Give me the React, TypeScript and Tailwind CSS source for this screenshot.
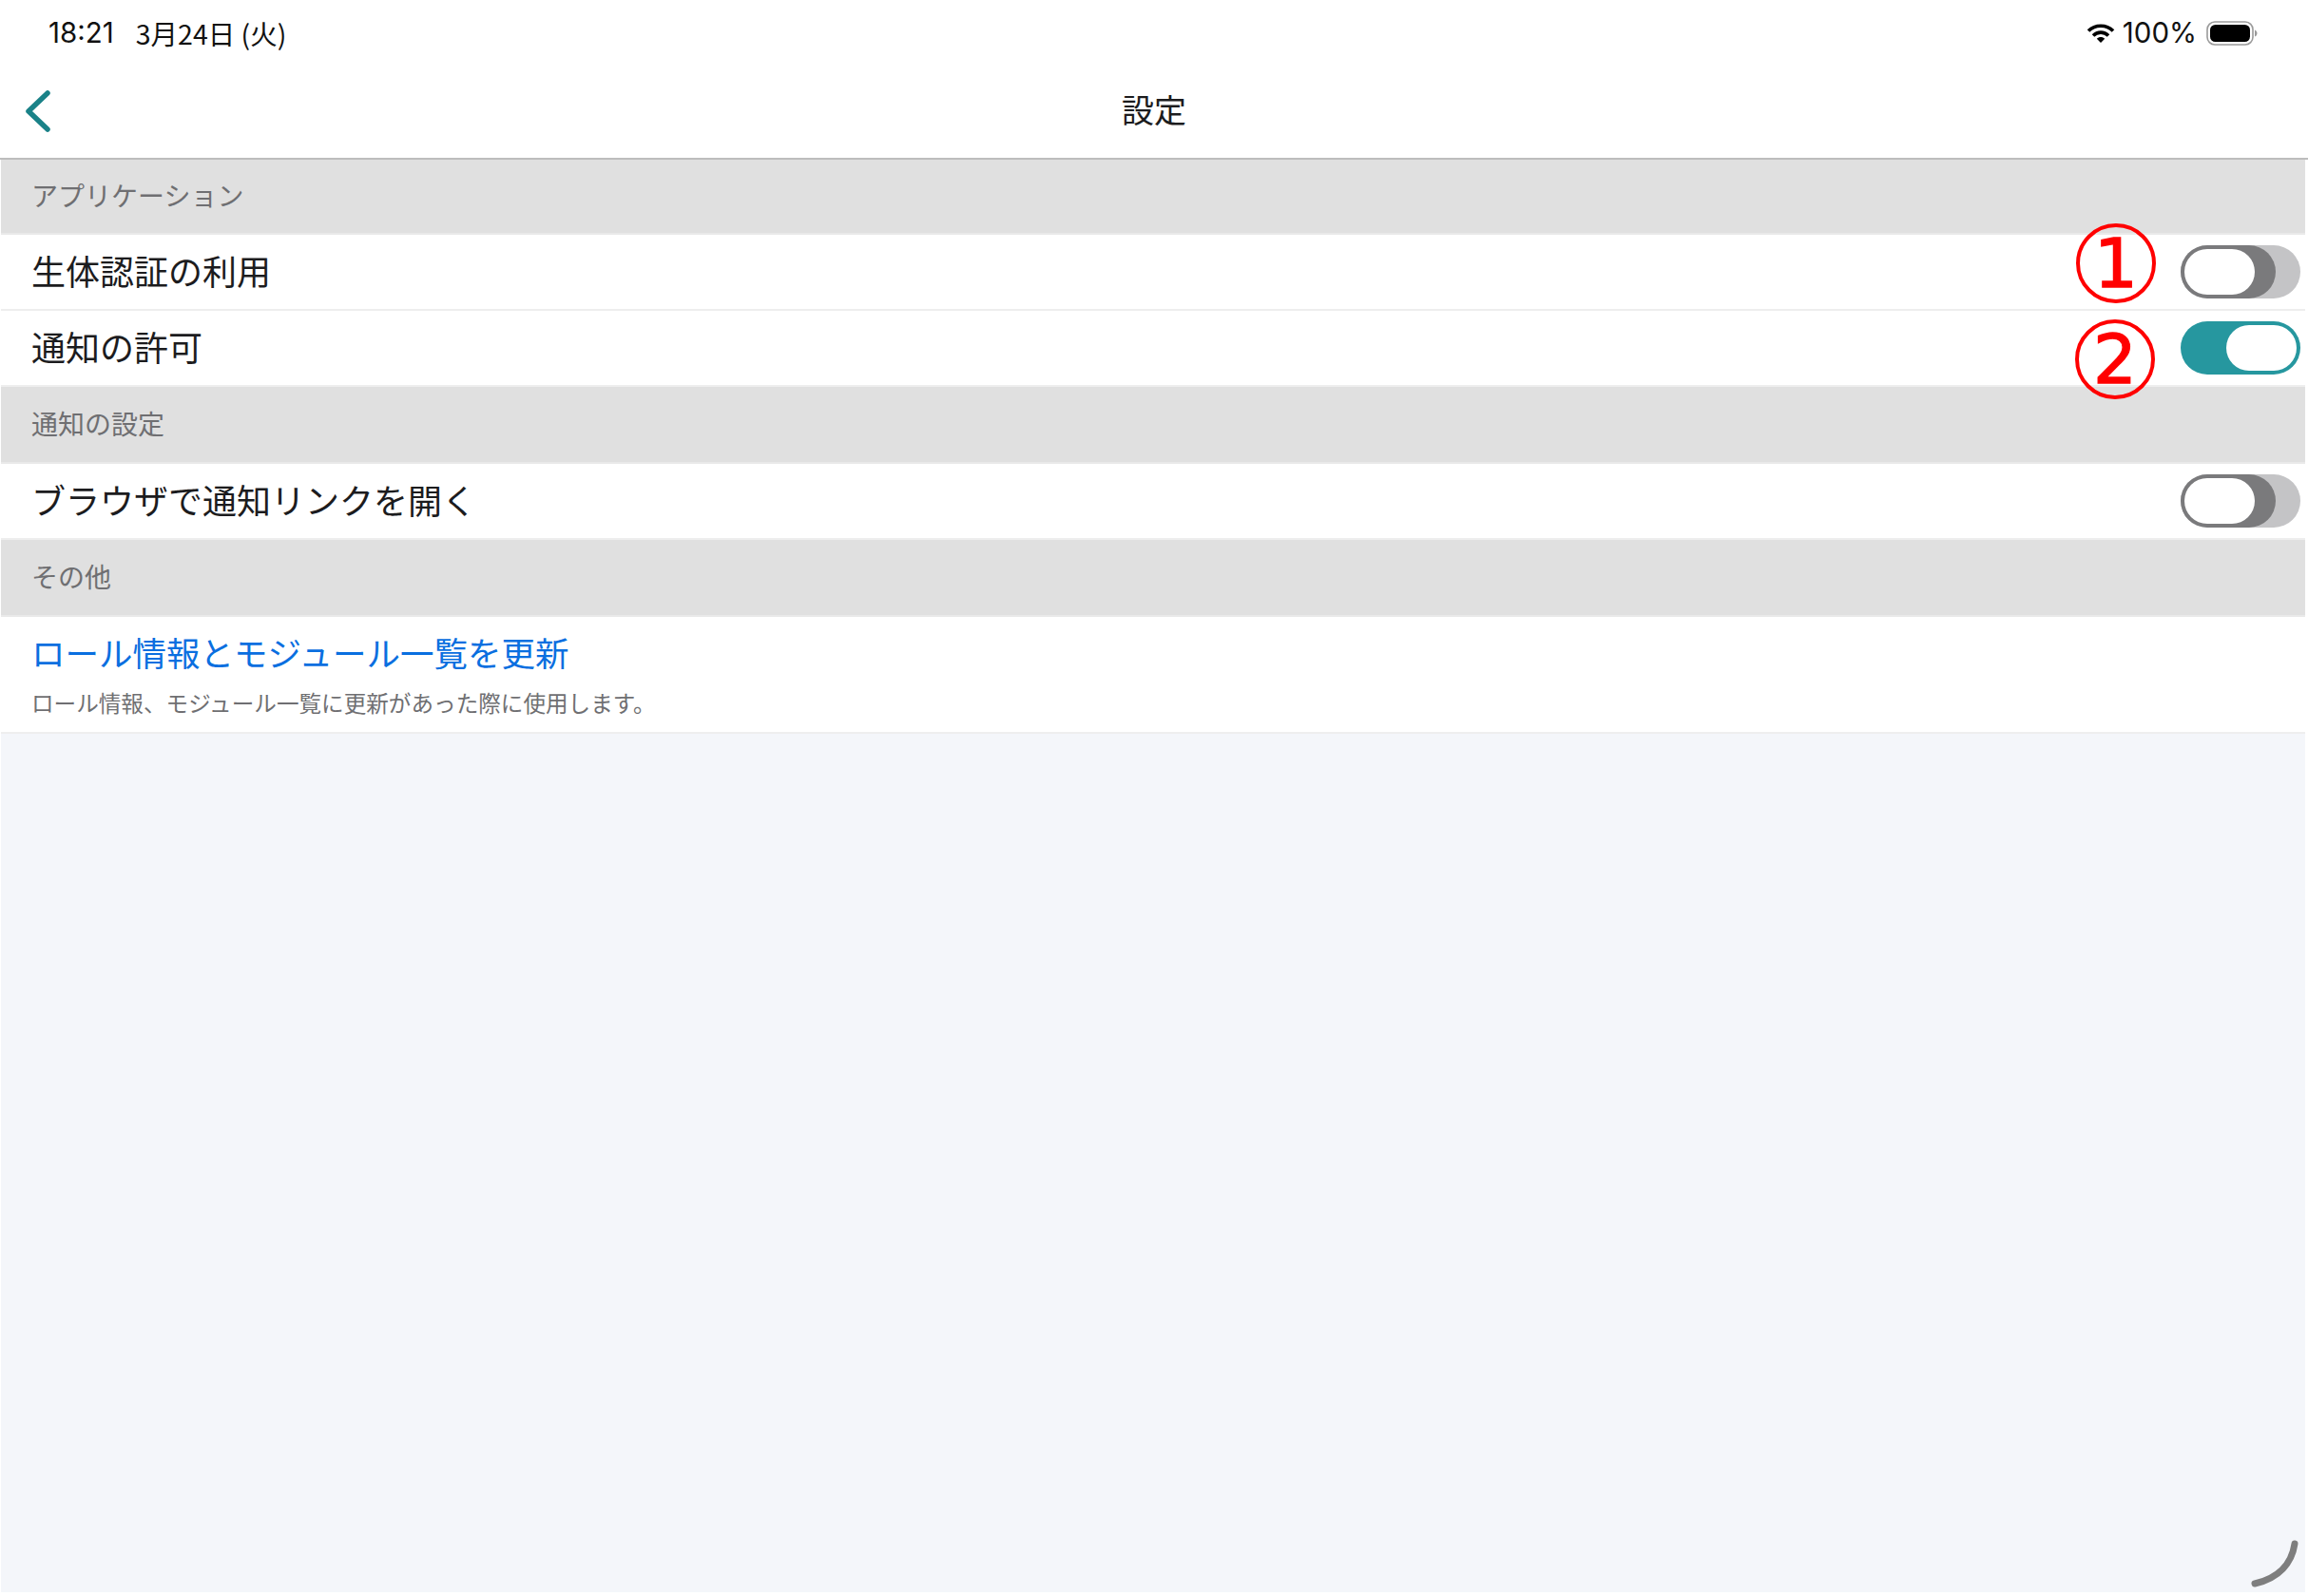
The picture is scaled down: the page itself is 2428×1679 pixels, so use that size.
function Toggle({ on }: { on: boolean }) {
  if (on) {
    return (
      <div className="flex h-[56px] w-[126px] items-center justify-end rounded-full bg-[#26979f] pr-[4px]">
        <div className="h-[48px] w-[74px] rounded-full bg-white" />
      </div>
    );
  }
  return (
    <div className="h-[56px] w-[126px] rounded-full bg-[#c4c4c6]">
      <div className="flex h-[56px] w-[100px] items-center rounded-full bg-[#7a7a7c] pl-[4px]">
        <div className="h-[48px] w-[74px] rounded-full bg-white" />
      </div>
    </div>
  );
}

function SectionHeader({ label, height }: { label: string; height: string }) {
  return (
    <div className={`flex items-center border-b-[2px] border-[#e9e9e9] bg-[#e0e0e0] pb-[3px] pl-[32px] ${height}`}>
      <span className="text-[28px] leading-none text-[#6f6f72]">{label}</span>
    </div>
  );
}

function Row({ label, on }: { label: string; on?: boolean }) {
  return (
    <div className="flex h-[80px] items-center justify-between border-b-[2px] border-[#eeeeee] bg-white pr-[5px] pb-[4px] pl-[32px]">
      <span className="text-[36px] leading-none text-[#1c1c1e]">{label}</span>
      {on !== undefined && (
        <div className="pt-[4px]">
          <Toggle on={on} />
        </div>
      )}
    </div>
  );
}

function Marker({ n, className }: { n: string; className: string }) {
  return (
    <div
      className={`absolute flex h-[84px] w-[84px] items-center justify-center rounded-full border-[4px] border-[#ff0000] text-[72px] leading-none text-[#ff0000] [-webkit-text-stroke:1.5px_#ff0000] ${className}`}
      style={{ fontFamily: '"DejaVu Sans", sans-serif' }}
    >
      {n}
    </div>
  );
}

export default function App() {
  return (
    <div
      className="relative flex h-[1679px] w-[2428px] flex-col overflow-hidden bg-white"
      style={{ fontFamily: '"Noto Sans CJK JP", "Noto Sans", sans-serif' }}
    >
      {/* Status bar */}
      <div className="flex h-[70px] items-center justify-between pr-[53px] pl-[51px] text-[29.500px] leading-none text-[#111111]">
        <div className="flex items-center gap-[23px]">
          <span style={{ fontFamily: 'Inter, sans-serif' }}>18:21</span>
          <span className="text-[28.500px]">3月24日 (火)</span>
        </div>
        <div className="flex items-center gap-[8px]">
          <svg width="30" height="22" viewBox="0 0 30 22" fill="none" stroke="#000" strokeWidth="3.6">
            <path d="M2 8.5c7-7 19-7 26 0" />
            <path d="M7 13.5c4.500-4.500 11.500-4.500 16 0" />
            <path d="M15 21l-4.200-4.200c2.300-2.300 6.100-2.300 8.400 0z" fill="#000" stroke="none" />
          </svg>
          <span style={{ fontFamily: 'Inter, sans-serif' }}>100%</span>
          <svg className="ml-[2px]" width="54" height="26" viewBox="0 0 54 26">
            <rect x="1" y="1" width="48" height="24" rx="8" fill="none" stroke="#9a9a9a" strokeWidth="1.600" />
            <rect x="4" y="4" width="42" height="18" rx="5.500" fill="#000" />
            <path d="M51 9.500c1.500.5 2.500 2 2.500 3.500s-1 3-2.500 3.500z" fill="#9a9a9a" />
          </svg>
        </div>
      </div>

      {/* Nav bar */}
      <div className="relative flex h-[98px] items-center justify-center border-b-[2px] border-[#bdbdbd] pb-[7px]">
        <svg className="absolute top-[24px] left-[25px]" width="30" height="46" viewBox="0 0 30 46" fill="none" stroke="#1a8288" strokeWidth="5.500" strokeLinecap="round" strokeLinejoin="round">
          <path d="M25 4L5 23l20 19" />
        </svg>
        <span className="text-[34px] leading-none text-[#1c1c1e]">設定</span>
      </div>

      {/* Settings list */}
      <div className="flex flex-1 flex-col pr-[3px] pb-[4px] pl-[1px]">
        <div className="flex flex-1 flex-col bg-[#f4f6fa]">
          <SectionHeader label="アプリケーション" height="h-[79px]" />
          <Row label="生体認証の利用" on={false} />
          <Row label="通知の許可" on={true} />
          <SectionHeader label="通知の設定" height="h-[81px]" />
          <Row label="ブラウザで通知リンクを開く" on={false} />
          <SectionHeader label="その他" height="h-[81px]" />
          <div className="flex h-[123px] flex-col border-b-[2px] border-[#eeeeee] bg-white pt-[19px] pl-[32px]">
            <span className="text-[35.500px] leading-none text-[#0a6fe0]">ロール情報とモジュール一覧を更新</span>
            <span className="mt-[24px] text-[23.600px] leading-none text-[#6f6f72]">ロール情報、モジュール一覧に更新があった際に使用します。</span>
          </div>
        </div>
      </div>

      {/* Annotations */}
      <Marker n="1" className="top-[235px] left-[2184px]" />
      <Marker n="2" className="top-[336px] left-[2183px]" />

      {/* Spinner */}
      <svg className="absolute top-[1616px] left-[2367px]" width="52" height="56" viewBox="0 0 52 56" fill="none" stroke="#7e7e7e" strokeWidth="7" strokeLinecap="round">
        <path d="M47 8c-3 20-16 36-42 42" />
      </svg>
    </div>
  );
}
